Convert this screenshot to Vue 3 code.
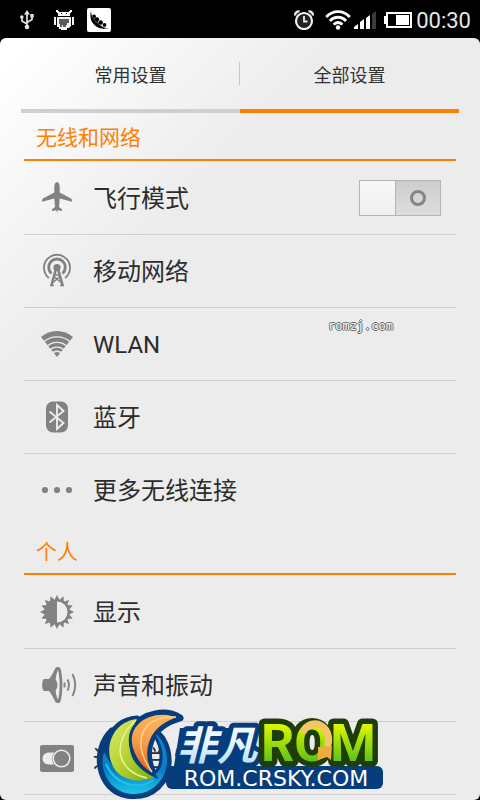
<script setup>
import { ref } from 'vue';

const activeTab = ref('all');
const airplaneMode = ref(false);

const tabs = [
  { id: 'common', name: '常用设置' },
  { id: 'all', name: '全部设置' }
];

const sections = [
  {
    id: 'wireless',
    title: '无线和网络',
    items: [
      { id: 'airplane', name: '飞行模式', toggle: true },
      { id: 'mobile', name: '移动网络' },
      { id: 'wlan', name: 'WLAN' },
      { id: 'bluetooth', name: '蓝牙' },
      { id: 'more', name: '更多无线连接' }
    ]
  },
  {
    id: 'personal',
    title: '个人',
    items: [
      { id: 'display', name: '显示' },
      { id: 'sound', name: '声音和振动' },
      { id: 'notification', name: '通知栏' }
    ]
  }
];

// Outline of the sun in the display icon
function sunPoints(rays, outer, inner) {
  const points = [];

  for (let i = 0; i < rays * 2; i++) {
    const radius = i % 2 === 0 ? outer : inner;
    const angle = (Math.PI * i) / rays;
    points.push(`${(17 + radius * Math.sin(angle)).toFixed(2)},${(17 - radius * Math.cos(angle)).toFixed(2)}`);
  }

  return points.join(' ');
}

const sun = sunPoints(16, 17, 12.5);
</script>

<template>
  <div class="screen">
    <header class="status-bar">
      <div class="status-group status-left">
        <!-- USB -->
        <svg width="16" height="20" viewBox="0 0 16 20" fill="none" stroke="#e4e4e4" stroke-width="1.7">
          <path d="M8 17V4M8 14L3 11V7M8 12.500L13 9.500V6" />
          <path d="M8 0l3 4.500H5z" fill="#e4e4e4" stroke="none" />
          <circle cx="8" cy="17" r="2.300" fill="#e4e4e4" stroke="none" />
          <circle cx="2.800" cy="7" r="1.800" fill="#e4e4e4" stroke="none" />
          <path d="M11.300 4h3.400v3.400h-3.400z" fill="#e4e4e4" stroke="none" />
        </svg>
        <!-- Debugging robot -->
        <svg class="robot" width="20" height="20" viewBox="0 0 20 20" fill="#f4f4f4">
          <path d="M2 0h2v1h1v1h10V1h1V0h2v2h-1v1h-1v3H4V3H3V2H2zM0 7h2v8H0zM18 7h2v8h-2zM3 7h14v9l-2 2h-2v2H7v-1H5v-2H3z" />
          <path d="M7 3h1v1H7zM12 3h1v1h-1z" fill="#000" />
          <path d="M5 9h10v4h-2v2h-1v2H9v-2H8v2H6v-3H5z" fill="#5a5a5a" />
        </svg>
        <!-- Pea pod -->
        <svg class="pod" width="24" height="24" viewBox="0 0 24 24">
          <rect width="24" height="24" rx="2" fill="#fff" />
          <path d="M4 2.500C2.500 9 4 14 8 17.500c4 3.500 9 4 14 2.500-3 0-5-.5-7-1.500L6 9C4.500 7 4.200 5 4 2.500z" fill="#000" />
          <g fill="#000">
            <circle cx="7" cy="8.500" r="2" />
            <circle cx="10" cy="11.500" r="2.200" />
            <circle cx="13.700" cy="14.500" r="2.200" />
            <circle cx="17.500" cy="17" r="1.900" />
          </g>
          <path d="M4 3v4l4 6 5 4 7 2.500" fill="none" stroke="#fff" stroke-width=".3" />
        </svg>
      </div>

      <div class="status-group status-right">
        <!-- Alarm -->
        <svg width="20" height="20" viewBox="0 0 20 20" fill="none" stroke="#f0f0f0">
          <circle cx="10" cy="11" r="8" stroke-width="2.200" fill="#222" />
          <path d="M1 5.500C1 3 3 1 5.500 1.500M19 5.500C19 3 17 1 14.500 1.500" stroke-width="2.400" />
          <path d="M10 6v5.500h3.500" stroke-width="1.800" />
        </svg>
        <!-- Wifi signal -->
        <svg class="wifi" width="26" height="20" viewBox="0 0 26 20" fill="none" stroke="#fff" stroke-width="2.800">
          <path d="M1.200 7C8 -.3 18 -.3 24.800 7M5 11C9.500 6 16.500 6 21 11M8.700 14.600C11 11.800 15 11.800 17.300 14.600" />
          <circle cx="13" cy="17.500" r="2.200" fill="#fff" stroke="none" />
        </svg>
        <!-- Mobile signal -->
        <svg width="22" height="18" viewBox="0 0 22 18" fill="#fff">
          <path d="M0 18v-2l4-3v5zM6 18v-7l4-3v10zM12 18V7l4-3v14z" />
          <path d="M18 18V3l4-3v18z" fill="#3c3c3c" />
        </svg>
        <!-- Battery -->
        <svg class="battery" width="28" height="16" viewBox="0 0 28 16">
          <path d="M0 4h2v8H0z" fill="#fff" />
          <rect x="3" y="1" width="24" height="14" fill="none" stroke="#fff" stroke-width="2" />
          <path d="M12 3h13v10H12z" fill="#fff" />
        </svg>
        <time>00:30</time>
      </div>
    </header>

    <main class="panel">
      <nav class="tabs">
        <button
          v-for="tab in tabs"
          :key="tab.id"
          type="button"
          class="tab"
          :class="{ 'tab-active': activeTab === tab.id }"
          @click="activeTab = tab.id"
        >
          {{ tab.name }}
        </button>
      </nav>

      <section v-for="section in sections" :key="section.id" class="section">
        <h2>{{ section.title }}</h2>
        <ul>
          <li v-for="item in section.items" :key="item.id">
            <component
              :is="item.toggle ? 'label' : 'a'"
              class="row"
              :href="item.toggle ? undefined : '#' + item.id"
              :for="item.toggle ? item.id : undefined"
            >
              <svg class="row-icon" width="34" height="34" viewBox="0 0 34 34" fill="#828282">
                <path
                  v-if="item.id === 'airplane'"
                  d="M17 1c1.800 0 2.700 2.500 2.700 5v5.500L31 17.500c.8.500 1 1.500 1 3.200L19.700 17.500 19 26l3 2.200V30l-4.300-.8L17 32l-.7-2.800L12 30v-1.800L15 26l-.7-8.500L2 20.700c0-1.700.2-2.700 1-3.200l11.300-6V6c0-2.500.9-5 2.700-5z"
                />
                <g v-else-if="item.id === 'mobile'" fill="none" stroke="#828282">
                  <path d="M9 24a13 13 0 1 1 16 0" stroke-width="1.800" />
                  <path d="M11.500 19.500a8.300 8.300 0 1 1 11 0" stroke-width="2.800" />
                  <circle cx="17" cy="13.500" r="3.600" fill="#828282" stroke="none" />
                  <path d="M16 15l-4.500 16M18 15l4.500 16" stroke-width="2.600" />
                  <path d="M14.500 21h5M14 22.500l7 6M20 22.500l-7 6M10 31.500h4M20 31.500h4" stroke-width="1.500" />
                </g>
                <g v-else-if="item.id === 'wlan'">
                  <path d="M17 30L1 10C10 2 24 2 33 10z" />
                  <g fill="none" stroke="#ececec" stroke-width="1.400">
                    <path d="M3 15.500a20.200 20.200 0 0 1 28 0" />
                    <path d="M6 20.300a14.700 14.700 0 0 1 22 0" />
                    <path d="M9 24.300a9.800 9.800 0 0 1 16 0" />
                    <path d="M12 27.200a5.700 5.700 0 0 1 10 0" />
                  </g>
                </g>
                <g v-else-if="item.id === 'bluetooth'">
                  <rect x="6" y="1.500" width="22" height="31" rx="7" />
                  <path d="M9.500 11.500L23.500 23 17 29V5l6.500 6L9.500 22.500" fill="none" stroke="#ececec" stroke-width="1.900" />
                </g>
                <g v-else-if="item.id === 'more'">
                  <circle cx="5" cy="17" r="3.100" />
                  <circle cx="17" cy="17" r="3.100" />
                  <circle cx="29" cy="17" r="3.100" />
                </g>
                <g v-else-if="item.id === 'display'">
                  <polygon :points="sun" />
                  <path d="M17 6.500a10.500 10.500 0 0 1 0 21z" fill="#ececec" />
                </g>
                <g v-else-if="item.id === 'sound'">
                  <path d="M4 11h5C12 8 13 4 15.500 0c1-1.500 4-1.500 5 .5 2.500 8 2.500 25 0 33-1 2-4 2-5 .5C13 30 12 26 9 23H4c-2.500-1-2.500-11 0-12z" />
                  <path d="M18 2c2.200 7 2.200 23 0 30-1.600-4-2.300-7-2.300-10 2.300-2 2.300-8 0-10 0-3 .7-6 2.300-10z" fill="#ececec" />
                  <path d="M24.500 14.500v5M27.500 11.500c1.800 3.500 1.800 7.500 0 11M32.500 6c3.500 7 3.500 15 0 22" fill="none" stroke="#828282" stroke-width="1.900" />
                </g>
                <g v-else>
                  <rect y="4" width="34" height="27" rx="2" />
                  <path d="M14 11.500H8.500a6 6 0 0 0 0 12H14a10 10 0 0 1 0-12z" fill="#ececec" />
                  <circle cx="21.500" cy="17.500" r="8.300" fill="#828282" stroke="#ececec" stroke-width="1.500" />
                </g>
              </svg>
              <span class="row-name">{{ item.name }}</span>
              <input
                v-if="item.toggle"
                :id="item.id"
                v-model="airplaneMode"
                type="checkbox"
                class="switch"
              >
            </component>
          </li>
        </ul>
      </section>
    </main>

    <span class="site-mark">romzj.com</span>

    <svg class="brand" width="290" height="94" viewBox="96 706 290 94">
      <defs>
        <linearGradient id="cyan" x1="0" y1="0" x2="0" y2="1">
          <stop offset="0" stop-color="#0c8cd2" />
          <stop offset=".6" stop-color="#087cc4" />
          <stop offset="1" stop-color="#1cc8ea" />
        </linearGradient>
        <linearGradient id="lime" x1="0" y1="0" x2="1" y2="1">
          <stop offset="0" stop-color="#dcea6c" />
          <stop offset=".5" stop-color="#b4d334" />
          <stop offset="1" stop-color="#79aa10" />
        </linearGradient>
        <linearGradient id="orange" x1=".6" y1="0" x2=".4" y2="1">
          <stop offset="0" stop-color="#fdb65e" />
          <stop offset=".5" stop-color="#f5a050" />
          <stop offset="1" stop-color="#dd5c10" />
        </linearGradient>
        <linearGradient id="ice" x1="0" y1="0" x2="0" y2="1">
          <stop offset="0" stop-color="#fff" />
          <stop offset=".5" stop-color="#e8f4fd" />
          <stop offset="1" stop-color="#a9d8f6" />
        </linearGradient>
        <linearGradient id="leaf" x1="0" y1="0" x2="0" y2="1">
          <stop offset=".2" stop-color="#dcf500" />
          <stop offset=".85" stop-color="#52bd1c" />
        </linearGradient>
      </defs>

      <!-- Dark blue backing of the swirl -->
      <g fill="#063d7c" stroke="#063d7c" stroke-width="7" stroke-linejoin="round">
        <path d="M112 731C92 750 98 790 127 795C152 799 170 781 168 758C167 744 161 735 154 732C163 742 165 757 161 768C155 778 145 781 136 780z" />
        <path d="M137 719C108 721 101 753 116 771C127 783 145 782 155 777C139 769 126 746 137 719z" />
        <path d="M180 718C166 709 144 713 134 727C124 743 136 767 154 775C142 751 149 727 180 718z" />
      </g>
      <path d="M104 752C98 773 112 793 132 794C154 795 168 777 167 758C166 746 161 737 154 733C163 744 165 758 160 769C150 784 121 787 104 752z" fill="url(#cyan)" />
      <path d="M106 764C115 785 139 791 153 780" fill="none" stroke="#25bfe8" stroke-width="2" />
      <path d="M137 719C110 722 102 753 116 771C127 783 145 782 155 777C132 768 121 747 137 719z" fill="url(#lime)" />
      <path d="M136 720C111 742 116 771 147 778" fill="none" stroke="#e8f594" stroke-width="1.500" />
      <path d="M180 718C166 709 144 713 134 727C124 743 136 767 155 776C142 751 149 727 180 718z" fill="url(#orange)" stroke="#063d7c" stroke-width="3" />
      <path d="M176 717C139 716 132 744 152 772" fill="none" stroke="#ffd18d" stroke-width="1.500" />

      <rect x="166" y="766" width="217" height="23" rx="6" fill="#063d7c" />
      <path d="M180 728h72v38h-78z" fill="#063d7c" />
      <text class="brand-cn" x="177" y="760">非凡</text>
      <text class="brand-rom" x="261" y="761">ROM</text>
      <!-- Golden arrow over the letter O -->
      <path d="M303 732A13 15 0 0 1 327 747" fill="none" stroke="#f6c468" stroke-width="7" />
      <path d="M318 747l14-1-1 14-4-3-9 3z" fill="#efab3c" />
      <text class="brand-url" x="276" y="786" text-anchor="middle">ROM.CRSKY.COM</text>
    </svg>
  </div>
</template>

<style>
body {
  margin: 0;
  background-color: #000;
}
</style>

<style scoped>
.screen {
  position: relative;
  display: flex;
  flex-direction: column;
  height: 100vh;
  overflow: hidden;
  background-color: #000;
  color: #2c2c2c;
  font-family: Roboto, "Noto Sans CJK SC", sans-serif;
}

.status-bar {
  display: flex;
  flex: none;
  align-items: center;
  justify-content: space-between;
  box-sizing: border-box;
  height: 38px;
  padding: 2px 9px 0 19px;
}

.status-group {
  display: flex;
  align-items: center;
}

.robot {
  margin-left: 19px;
}

.pod {
  margin-left: 13px;
}

.status-right {
  gap: 5px;
}

.wifi {
  margin-left: 6px;
  margin-right: -2px;
}

.battery {
  margin-left: 3px;
}

.status-right time {
  margin-left: -1px;
  padding-top: 2px;
  color: #e6e6e6;
  font-size: 22px;
  line-height: 24px;
}

.panel {
  flex: 1;
  min-height: 0;
  overflow: hidden;
  border-radius: 6px;
  background: linear-gradient(135deg, #fff 20px, #ececec 250px);
}

.tabs {
  position: relative;
  display: flex;
  margin: 0 21px;
}

/* Thin line between the two tabs */
.tabs::after {
  content: "";
  position: absolute;
  top: 24px;
  right: 50%;
  width: 1px;
  height: 23px;
  background-color: #c8c8c8;
}

.tab {
  flex: 1;
  height: 75px;
  padding: 0;
  border: 0;
  border-bottom: 4px solid #cfcfcf;
  background: none;
  color: #333;
  font-family: inherit;
  font-size: 18px;
  cursor: pointer;
}

.tab-active {
  border-bottom-color: #ff8000;
}

.section {
  margin: 0 24px;
}

.section h2 {
  box-sizing: border-box;
  height: 48px;
  margin: 0;
  padding-left: 12px;
  border-bottom: 2px solid #ff8000;
  color: #ff8000;
  font-size: 21px;
  font-weight: 400;
  line-height: 50px;
}

.section ul {
  margin: 0;
  padding: 1px 0 0;
  list-style: none;
}

.section li {
  box-sizing: border-box;
  height: 73px;
  border-bottom: 1px solid #d0d0d0;
}

.section:not(:last-child) li:last-child {
  border-bottom: 0;
}

.row {
  display: flex;
  align-items: center;
  height: 72px;
  padding: 0 15px 0 16px;
  color: inherit;
  font-size: 24px;
  line-height: 28px;
  text-decoration: none;
  cursor: pointer;
}

.row-icon {
  flex: none;
  overflow: visible;
}

.row-name {
  flex: 1;
  margin-left: 19px;
  padding-top: 2px;
  white-space: nowrap;
}

.switch {
  display: flex;
  align-items: center;
  box-sizing: border-box;
  width: 82px;
  height: 36px;
  margin: 0;
  border: 1px solid #b4b4b4;
  appearance: none;
  background: linear-gradient(#cdcdcd, #dedede);
  cursor: pointer;
}

.switch::before {
  content: "";
  width: 35px;
  height: 34px;
  border-right: 1px solid #b4b4b4;
  background: linear-gradient(#f8f8f8, #f0f0f0);
}

.switch::after {
  content: "";
  box-sizing: border-box;
  width: 16px;
  height: 16px;
  margin: 0 auto;
  border: 3px solid #868686;
  border-radius: 50%;
}

.switch:checked {
  flex-direction: row-reverse;
  background: #ff8000;
}

.site-mark {
  position: absolute;
  top: 318px;
  right: 87px;
  color: #fff;
  font-family: "DejaVu Sans Mono", monospace;
  font-size: 12px;
  line-height: 16px;
  text-shadow: 1px 0 #666, -1px 0 #666, 0 1px #666, 0 -1px #666;
}

.brand {
  position: absolute;
  bottom: 0;
  left: 50%;
  transform: translateX(-144px);
}

.brand text {
  paint-order: stroke;
  stroke-linejoin: round;
}

.brand-cn {
  fill: url(#ice);
  stroke: #063d7c;
  stroke-width: 10px;
  font-family: "Noto Sans CJK SC", sans-serif;
  font-size: 40px;
  font-style: italic;
  font-weight: 700;
}

.brand-rom {
  fill: url(#leaf);
  stroke: #1f3d06;
  stroke-width: 11px;
  font-family: Roboto, sans-serif;
  font-size: 52px;
  font-weight: 700;
}

.brand-url {
  fill: #fff;
  font-family: "DejaVu Sans", sans-serif;
  font-size: 22px;
}
</style>
